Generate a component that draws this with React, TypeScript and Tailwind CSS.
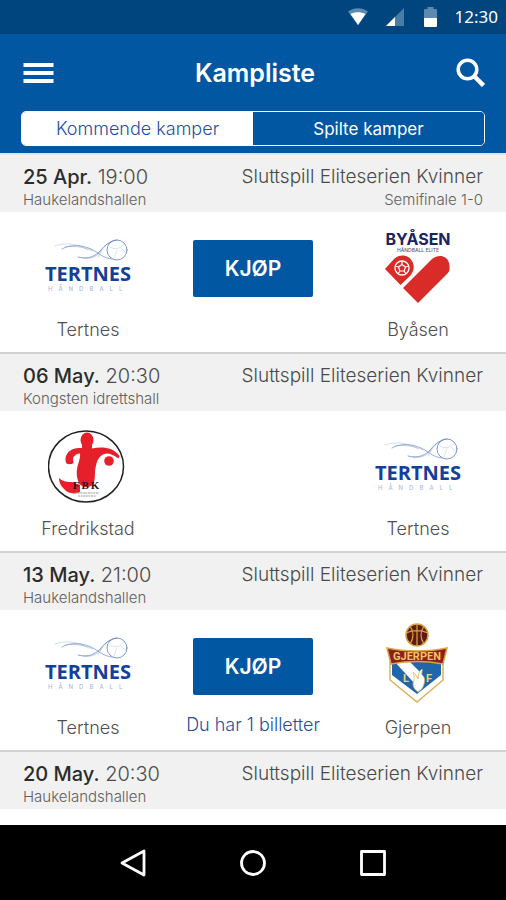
import React, { useState } from 'react';
import clsx from 'clsx';

type Club = 'tertnes' | 'byasen' | 'fredrikstad' | 'gjerpen';

interface Match {
  date: string;
  time: string;
  arena: string;
  league: string;
  round?: string;
  home?: Club;
  away?: Club;
  onSale?: boolean;
  tickets?: string;
}

const LEAGUE = 'Sluttspill Eliteserien Kvinner';

const matches: Match[] = [
  {
    date: '25 Apr.',
    time: '19:00',
    arena: 'Haukelandshallen',
    league: LEAGUE,
    round: 'Semifinale 1-0',
    home: 'tertnes',
    away: 'byasen',
    onSale: true,
  },
  {
    date: '06 May.',
    time: '20:30',
    arena: 'Kongsten idrettshall',
    league: LEAGUE,
    home: 'fredrikstad',
    away: 'tertnes',
  },
  {
    date: '13 May.',
    time: '21:00',
    arena: 'Haukelandshallen',
    league: LEAGUE,
    home: 'tertnes',
    away: 'gjerpen',
    onSale: true,
    tickets: 'Du har 1 billetter',
  },
  { date: '20 May.', time: '20:30', arena: 'Haukelandshallen', league: LEAGUE },
];

const TertnesLogo = () => (
  <svg width="96" height="80" viewBox="-4 0 96 80" aria-hidden="true">
    <g fill="none" stroke="#6f8cc6" strokeLinecap="round">
      <circle cx="73" cy="23" r="10" strokeWidth="0.9" />
      <path d="M18 22c8-5 20-4 29 0 7 3 11 9 21 10" strokeWidth="0.7" />
      <path d="M11 19c10-4 25-2 33 4" strokeWidth="0.3" />
      <path d="M21 20c10-2 22 1 28 4" strokeWidth="0.4" />
      <path d="M34 30c10 3 18-1 23-7 4-5 9-9 16-10" strokeWidth="0.8" />
      <path d="M39 31c7 1 13 0 18-7M54 30c4-8 9-15 17-17" strokeWidth="0.4" />
      <path d="M66 20c5 3 10 2 14-3M73 23l-3 8M77 21l5 5" strokeWidth="0.25" />
    </g>
    <text x="44" y="54" textAnchor="middle" fill="#12409a" className="font-['Open_Sans',sans-serif] text-[20px] font-bold">
      TERTNES
    </text>
    <text x="4" y="64" fill="#a3b4d6" className="font-['Inter',sans-serif] text-[6px] tracking-[6px]">
      HÅNDBALL
    </text>
  </svg>
);

const ByasenLogo = () => (
  <svg width="72" height="80" viewBox="0 0 72 80" aria-hidden="true">
    <text x="36" y="18" textAnchor="middle" fill="#1b2460" className="font-['Inter',sans-serif] text-[16px] font-bold">
      BYÅSEN
    </text>
    <text x="36" y="25" textAnchor="middle" fill="#555c85" className="font-['Inter',sans-serif] text-[5px] font-medium">
      HÅNDBALL ELITE
    </text>
    <g fill="#d92b27">
      <path d="M3 42L12 32C18 26 27 28 30 34C33 39 32 44 28 49L18.500 58Z" />
      <path d="M21 61L50 32C56 27 65 28 67 36C68 41 68 44 65 47L36 76Z" />
    </g>
    <circle cx="20" cy="41" r="7" fill="none" stroke="#fff" strokeWidth="1.300" />
    <path
      d="M20 37.500l3.500 2.500-1.300 4h-4.400l-1.300-4zM20 34v3.500M27 39l-3.500 1M24 47l-1.800-3M16 47l1.800-3M13 39l3.500 1"
      fill="none"
      stroke="#fff"
      strokeWidth="1.200"
    />
  </svg>
);

const FredrikstadLogo = () => (
  <svg width="80" height="80" viewBox="2 0 80 80" aria-hidden="true">
    <ellipse cx="40" cy="40.500" rx="37.500" ry="35.500" fill="#fff" stroke="#222" strokeWidth="1.500" />
    <g fill="#e5202b">
      <ellipse cx="41" cy="14" rx="6.500" ry="7.500" />
      <path d="M36 19h10v3.500c9-2 21-2 27.500 7.500l-1 2.500c-4-3-8-5-12-5-6 1-9 5-10.500 12-2 8 0 11-2.500 18.500-3 4-11 4-14 0-4-8-3-15-1-21 1-4 2-6 1.500-9.500-3-.5-6 2-7 4.500l.5 5c-2 1.500-5 1.500-7 .5-2-4-1-8 2-11.500 4-4 9-4 13.500-4z" />
      <circle cx="63" cy="35" r="4.800" />
      <path d="M13 52c4 4 9 4 13 4l8 3v7c-6 3-13 1-16-3-3-3-5-6-5-11z" />
    </g>
    <text x="41" y="63" textAnchor="middle" fill="#26141c" className="font-['Liberation_Serif',serif] text-[11px] font-bold tracking-[2px]">
      FBK
    </text>
    <path d="M29 67h24M32 70h18" stroke="#999" strokeWidth="1" strokeDasharray="2 .6" />
  </svg>
);

const GjerpenLogo = () => (
  <svg width="72" height="88" viewBox="0 5 72 88" aria-hidden="true">
    <circle cx="35" cy="19" r="11" fill="#5d1a16" stroke="#d9a441" strokeWidth="1.500" />
    <path d="M35 8v22M28 10c4 6 4 12 0 18M42 10c-4 6-4 12 0 18M24 17c7-3 15-3 22 0" fill="none" stroke="#d9a441" strokeWidth="1.200" />
    <path d="M8 46v18l27 22 26-22V46z" fill="#fff" stroke="#d9b35c" strokeWidth="1.500" />
    <path d="M10 45h49v14L35 78 10 59z" fill="#1f66ab" />
    <path d="M12 45h15l11 11-5 12z" fill="#fff" />
    <path
      d="M31 56c2 2 4 4 5 7 0-4 1-8 4-10 1 2-1 4 0 6 3 2 3 6 2 9-1 4-3 6-6 8-3-2-5-5-5-8 1-4 2-7 0-12z"
      fill="#fff"
      stroke="#d9b35c"
      strokeWidth=".8"
    />
    <path d="M5 32c18 4 42 4 60 0l-4 16c-16-3-36-3-52 0z" fill="#8e201c" stroke="#d9a441" strokeWidth="1.500" />
    <text x="35" y="44" textAnchor="middle" fill="#f0c461" className="font-['Roboto',sans-serif] text-[11px] font-bold">
      GJERPEN
    </text>
    <text x="24" y="66" textAnchor="middle" fill="#ecd18a" className="font-['Roboto',sans-serif] text-[11px] font-bold">
      L
    </text>
    <text x="47" y="66" textAnchor="middle" fill="#ecd18a" className="font-['Roboto',sans-serif] text-[11px] font-bold">
      F
    </text>
  </svg>
);

const clubs: Record<Club, { name: string; Logo: React.FC }> = {
  tertnes: { name: 'Tertnes', Logo: TertnesLogo },
  byasen: { name: 'Byåsen', Logo: ByasenLogo },
  fredrikstad: { name: 'Fredrikstad', Logo: FredrikstadLogo },
  gjerpen: { name: 'Gjerpen', Logo: GjerpenLogo },
};

const Team: React.FC<{ club: Club }> = ({ club }) => {
  const { name, Logo } = clubs[club];
  return (
    <div className="flex w-34 flex-col items-center">
      <div className="flex h-28 items-center justify-center pb-0.5">
        <Logo />
      </div>
      <span className="-mt-1.5 text-lg leading-6 font-light text-[#505050]">{name}</span>
    </div>
  );
};

const MatchCard: React.FC<{ match: Match }> = ({ match }) => (
  <article className="border-t-2 border-[#d2d2d2] first:border-[#dce7f2]">
    <div className="flex h-[57px] justify-between bg-[#f1f1f1] px-[23px] pt-[9px] text-[15px] leading-5 font-light text-[#606060]">
      <div>
        <h2 className="text-xl leading-[26px] font-light text-[#4a4a4a]">
          <span className="font-medium text-[#2b2b2b]">{match.date}</span> {match.time}
        </h2>
        <p>{match.arena}</p>
      </div>
      <div className="text-right">
        <p className="text-[19px] leading-[26px] text-[#4a4a4a]">{match.league}</p>
        {match.round && <p>{match.round}</p>}
      </div>
    </div>
    {match.home && match.away && (
      <div className="flex h-35 justify-between px-5">
        <Team club={match.home} />
        {match.onSale && (
          <div className="flex flex-col items-center pt-7">
            <button className="h-[57px] w-30 rounded-xs bg-[#0257a2] text-[21px] font-semibold text-white">
              KJØP
            </button>
            {match.tickets && (
              <a href="#billetter" className="mt-[18px] text-lg leading-6 font-light text-[#1f4fa0]">
                {match.tickets}
              </a>
            )}
          </div>
        )}
        <Team club={match.away} />
      </div>
    )}
  </article>
);

const StatusBar = () => (
  <div className="flex h-[34px] items-center justify-end bg-[#01457f] pr-2 text-white">
    <svg width="20" height="18" viewBox="0 0 20 18" aria-hidden="true">
      <path d="M0 3.500C6-1 14-1 20 3.500L10 17z" fill="#5c8ab1" />
      <path d="M2.500 6C7 3.500 13 3.500 17.500 6L10 17z" fill="#fff" />
    </svg>
    <svg width="18" height="18" viewBox="0 0 18 18" className="ml-[18px]" aria-hidden="true">
      <path d="M18 0v18H0z" fill="#4a7ca8" />
      <path d="M9 9v9H0z" fill="#fff" />
    </svg>
    <svg width="13" height="20" viewBox="0 0 13 20" className="ml-5" aria-hidden="true">
      <path d="M0 3q0-1 1-1h2.500V0h6v2H12q1 0 1 1v8H0z" fill="#5c8ab1" />
      <path d="M0 11h13v8q0 1-1 1H1q-1 0-1-1z" fill="#fff" />
    </svg>
    <time className="ml-[18px] font-['Noto_Sans',sans-serif] text-[17px] leading-6">12:30</time>
  </div>
);

const tabs = ['Kommende kamper', 'Spilte kamper'];

export default function App() {
  const [activeTab, setActiveTab] = useState(0);

  return (
    <div className="flex min-h-screen flex-col bg-white font-['Inter',sans-serif]">
      <StatusBar />

      <header className="bg-[#0257a2] px-[21px] pb-[7px] text-white">
        <div className="flex h-[77px] items-center justify-between">
          <button aria-label="Meny">
            <svg width="34" height="22" viewBox="0 0 34 22" aria-hidden="true">
              <path d="M2.500 3h30M2.500 11h30M2.500 19h30" stroke="#fff" strokeWidth="4" />
            </svg>
          </button>
          <h1 className="text-[25px] leading-8 font-semibold">Kampliste</h1>
          <button aria-label="Søk">
            <svg width="30" height="30" viewBox="0 0 30 30" fill="none" stroke="#fff" aria-hidden="true">
              <circle cx="12.500" cy="11.500" r="9.300" strokeWidth="3.500" />
              <path d="M19 18l9.500 9.500" strokeWidth="4.500" />
            </svg>
          </button>
        </div>
        <div role="tablist" className="flex h-[35px] overflow-hidden rounded-[5px] border border-white">
          {tabs.map((tab, i) => (
            <button
              key={tab}
              role="tab"
              aria-selected={activeTab === i}
              onClick={() => setActiveTab(i)}
              className={clsx(
                'flex-1 leading-6',
                activeTab === i ? 'bg-white text-lg font-light text-[#1f4fa0]' : 'bg-[#0257a2] text-[17px] text-white',
              )}
            >
              {tab}
            </button>
          ))}
        </div>
      </header>

      <main className="flex-1">
        {matches.map((match) => (
          <MatchCard key={match.date} match={match} />
        ))}
      </main>

      <nav className="flex h-[75px] items-center justify-center gap-[94px] bg-black">
        <button aria-label="Tilbake">
          <svg width="26" height="28" viewBox="0 0 26 28" fill="none" stroke="#fff" strokeWidth="2.800" strokeLinejoin="round" aria-hidden="true">
            <path d="M24 2v24L2 14z" />
          </svg>
        </button>
        <button aria-label="Hjem">
          <svg width="26" height="26" viewBox="0 0 26 26" fill="none" stroke="#fff" strokeWidth="2.800" aria-hidden="true">
            <circle cx="13" cy="13" r="11.500" />
          </svg>
        </button>
        <button aria-label="Oversikt">
          <svg width="26" height="26" viewBox="0 0 26 26" fill="none" stroke="#fff" strokeWidth="2.800" strokeLinejoin="round" aria-hidden="true">
            <path d="M1.500 1.500h23v23h-23z" />
          </svg>
        </button>
      </nav>
    </div>
  );
}
